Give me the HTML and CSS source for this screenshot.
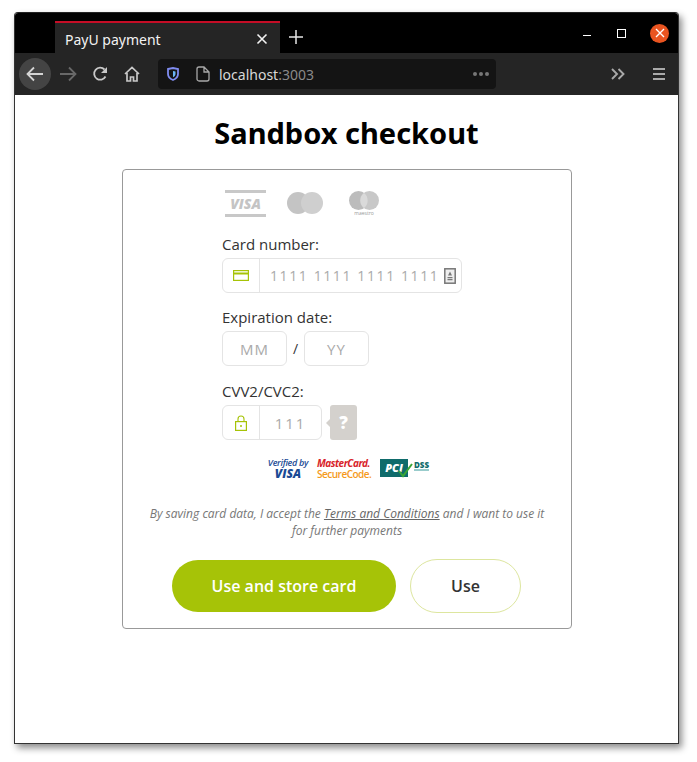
FILE: index.html
```html
<!DOCTYPE html>
<html lang="en">
<head>
    <meta charset="UTF-8">
    <meta name="viewport" content="width=device-width, initial-scale=1.0">
    <title>PayU payment</title>
    <link rel="stylesheet" href="styles.css">
</head>
<body>
    <div class="window">
        <div class="tabstrip">
            <div class="tab">
                <span class="tab-title">PayU payment</span>
                <svg class="tab-close" width="12" height="12" viewBox="0 0 12 12"><path d="M1.5 1.5l9 9M10.5 1.5l-9 9" stroke="#f2f2f2" stroke-width="1.6"/></svg>
            </div>
            <svg class="new-tab" width="14" height="14" viewBox="0 0 14 14"><path d="M7 0v14M0 7h14" stroke="#e6e6e6" stroke-width="1.5"/></svg>
            <div class="win-controls">
                <span class="win-min"></span>
                <span class="win-max"></span>
                <span class="win-close">
                    <svg width="10" height="10" viewBox="0 0 10 10"><path d="M1 1l8 8M9 1l-8 8" stroke="#fff" stroke-width="1.4"/></svg>
                </span>
            </div>
        </div>

        <div class="toolbar">
            <span class="back-btn">
                <svg width="18" height="16" viewBox="0 0 18 16"><path d="M17 8H2M8 1.5L1.5 8 8 14.5" fill="none" stroke="#d4d4d4" stroke-width="1.8"/></svg>
            </span>
            <svg class="fwd" width="18" height="16" viewBox="0 0 18 16"><path d="M1 8h15M10 1.5L16.500 8 10 14.500" fill="none" stroke="#686868" stroke-width="1.8"/></svg>
            <svg class="reload" width="16" height="16" viewBox="0 0 16 16"><path d="M13.500 10.500A6 6 0 1 1 12.500 3.500" fill="none" stroke="#c8c8c8" stroke-width="1.800"/><path d="M15 1v6H9z" fill="#c8c8c8"/></svg>
            <svg class="home" width="16" height="16" viewBox="0 0 16 16"><path d="M1 8l7-6.500L15 8M3 7v8h3.500v-4h3v4H13V7" fill="none" stroke="#c8c8c8" stroke-width="1.700"/></svg>
            <div class="urlbar">
                <svg class="shield" width="12" height="14" viewBox="0 0 12 14"><path d="M1 2l5-1 5 1v5c0 3-2.500 5-5 6-2.500-1-5-3-5-6z" fill="none" stroke="#7f8cf0" stroke-width="1.800"/><path d="M6 4l2.500.6V7c0 1.500-1.200 2.600-2.500 3.200z" fill="#6bb5f5"/></svg>
                <svg class="doc" width="14" height="16" viewBox="0 0 14 16"><path d="M1 3a2 2 0 0 1 2-2h5l5 5v7a2 2 0 0 1-2 2H3a2 2 0 0 1-2-2zM8 1v5h5" fill="none" stroke="#a8a8a8" stroke-width="1.300"/></svg>
                <span class="url">localhost<span class="url-port">:3003</span></span>
                <span class="url-dots"><i></i><i></i><i></i></span>
            </div>
            <svg class="overflow" width="14" height="12" viewBox="0 0 14 12"><path d="M1 1l5 5-5 5M7.500 1l5 5-5 5" fill="none" stroke="#a8a8a8" stroke-width="1.900"/></svg>
            <span class="burger"><i></i><i></i><i></i></span>
        </div>

        <main class="content">
            <h1 class="page-title">Sandbox checkout</h1>
            <form class="card">
                <div class="form-col">
                    <div class="brands">
                        <div class="brand-visa"><span>VISA</span></div>
                        <svg class="brand-mc" width="36" height="22" viewBox="0 0 36 22"><circle cx="11" cy="11" r="11" fill="#c4c4c4"/><circle cx="25" cy="11" r="11" fill="#cfcfcf"/></svg>
                        <div class="brand-maestro">
                            <svg width="30" height="19" viewBox="0 0 30 19"><circle cx="9.500" cy="9.500" r="9.500" fill="#bcbcbc"/><circle cx="20.500" cy="9.500" r="9.500" fill="#c8c8c8"/><path d="M15 2a9.500 9.500 0 0 1 0 15 9.500 9.500 0 0 1 0-15z" fill="#dadada"/></svg>
                            <span>maestro</span>
                        </div>
                    </div>

                    <label class="field-label">Card number:</label>
                    <div class="input-box input-number">
                        <span class="input-icon">
                            <svg width="16" height="11" viewBox="0 0 16 11"><rect x=".6" y=".6" width="14.800" height="9.800" fill="none" stroke="#a6c307" stroke-width="1.200"/><path d="M0 3.500h16" stroke="#a6c307" stroke-width="2"/></svg>
                        </span>
                        <span class="input-ph">1111 1111 1111 1111</span>
                        <svg class="scan" width="12" height="16" viewBox="0 0 12 16"><rect x=".8" y=".8" width="10.400" height="14.400" fill="#eee" stroke="#777" stroke-width="1.500"/><path d="M6 3.500l2 4H4zM3.500 9h5v1.200h-5zM3.500 11h5v1.200h-5z" fill="#777"/></svg>
                    </div>

                    <label class="field-label">Expiration date:</label>
                    <div class="exp-row">
                        <div class="input-box input-exp">MM</div>
                        <span class="exp-sep">/</span>
                        <div class="input-box input-exp">YY</div>
                    </div>

                    <label class="field-label">CVV2/CVC2:</label>
                    <div class="cvv-row">
                        <div class="input-box input-cvv">
                            <span class="input-icon">
                                <svg width="12" height="16" viewBox="0 0 12 16"><path d="M3 7V4a3 3 0 0 1 6 0v3" fill="none" stroke="#a6c307" stroke-width="1.100"/><rect x=".6" y="6.600" width="10.800" height="8.800" fill="none" stroke="#a6c307" stroke-width="1.200"/><circle cx="6" cy="11" r="1" fill="#a6c307"/></svg>
                            </span>
                            <span class="input-ph">111</span>
                        </div>
                        <span class="help">?</span>
                    </div>

                    <div class="secure-logos">
                        <div class="logo-vbv"><span>Verified by</span><b>VISA</b></div>
                        <div class="logo-msc"><span>MasterCard.</span><b>SecureCode.</b></div>
                        <div class="logo-pci">
                            <span class="pci-badge">PCI</span>
                            <svg class="pci-check" width="16" height="15" viewBox="0 0 16 15"><path d="M1 8l4 5 9-12" fill="none" stroke="#3aa535" stroke-width="2"/></svg>
                            <span class="pci-dss">DSS</span>
                        </div>
                    </div>
                </div>

                <p class="terms">By saving card data, I accept the <a href="#">Terms and Conditions</a> and I want to use it for further payments</p>

                <div class="actions">
                    <button type="button" class="btn-primary">Use and store card</button>
                    <button type="button" class="btn-secondary">Use</button>
                </div>
            </form>
        </main>
    </div>
</body>
</html>
```

FILE: styles.css
```css
body {
    margin: 0;
    padding: 12px 18px 18px 14px;
    background-color: #fff;
    font-family: "Open Sans", Arial, sans-serif;
}
.window {
    height: 732px;
    box-sizing: border-box;
    display: flex;
    flex-direction: column;
    border: 1px solid #333;
    border-top-color: #222;
    border-radius: 4px 4px 0 0;
    box-shadow: 3px 4px 7px rgba(0, 0, 0, 0.45);
    overflow: hidden;
}

/* tab strip */
.tabstrip {
    height: 40px;
    flex: none;
    display: flex;
    align-items: flex-end;
    background-color: #000;
}
.tab {
    width: 225px;
    height: 32px;
    margin-left: 40px;
    box-sizing: border-box;
    display: flex;
    align-items: center;
    justify-content: space-between;
    padding: 2px 12px 0 10px;
    background-color: #252525;
    border-top: 2px solid #c50d26;
    color: #f2f2f2;
    font-family: "Noto Sans", sans-serif;
    font-size: 14px;
}
.new-tab {
    margin: 0 0 9px 9px;
}
.win-controls {
    margin-left: auto;
    align-self: stretch;
    display: flex;
    align-items: center;
    padding-right: 9px;
    gap: 24px;
}
.win-min {
    width: 8px;
    height: 1px;
    margin-top: 5px;
    background-color: #fff;
}
.win-max {
    width: 7px;
    height: 7px;
    border: 1px solid #fff;
    margin-left: 2px;
}
.win-close {
    width: 19px;
    height: 19px;
    border-radius: 50%;
    background-color: #e95420;
    display: flex;
    align-items: center;
    justify-content: center;
}

/* toolbar */
.toolbar {
    height: 42px;
    flex: none;
    display: flex;
    align-items: center;
    background-color: #252525;
}
.back-btn {
    width: 32px;
    height: 32px;
    margin-left: 4px;
    border-radius: 50%;
    background-color: #444;
    display: flex;
    align-items: center;
    justify-content: center;
}
.fwd {
    margin-left: 8px;
}
.reload {
    margin-left: 15px;
}
.home {
    margin-left: 16px;
}
.urlbar {
    width: 338px;
    height: 30px;
    margin-left: 18px;
    display: flex;
    align-items: center;
    background-color: #141414;
    border-radius: 4px;
}
.shield {
    margin-left: 9px;
}
.doc {
    margin-left: 17px;
}
.url {
    margin-left: 9px;
    color: #d8d8d8;
    font-family: "Noto Sans", sans-serif;
    font-size: 14px;
}
.url-port {
    color: #8a8a8a;
}
.url-dots {
    margin-left: auto;
    margin-right: 7px;
    display: flex;
    gap: 2px;
}
.url-dots i {
    width: 4px;
    height: 4px;
    border-radius: 50%;
    background-color: #777;
}
.overflow {
    margin-left: 115px;
}
.burger {
    margin-left: 28px;
    width: 12px;
    display: flex;
    flex-direction: column;
    gap: 3px;
}
.burger i {
    height: 2px;
    background-color: #aaa;
}

/* page */
.content {
    flex: 1;
    background-color: #fff;
    padding-top: 19px;
}
.page-title {
    margin: 0 0 15px;
    height: 40px;
    line-height: 38px;
    text-align: center;
    font-family: "Noto Sans", sans-serif;
    font-size: 29px;
    font-weight: 700;
    color: #000;
}
.card {
    width: 450px;
    height: 460px;
    margin-left: 107px;
    box-sizing: border-box;
    border: 1px solid #999;
    border-radius: 4px;
}
.form-col {
    margin-left: 99px;
    padding-top: 20px;
}
.brands {
    display: flex;
    align-items: flex-start;
    height: 28px;
    padding-left: 3px;
}
.brand-visa {
    width: 41px;
    height: 27px;
    box-sizing: border-box;
    border-top: 3px solid #c8c8c8;
    border-bottom: 3px solid #c8c8c8;
    display: flex;
    align-items: center;
    justify-content: center;
    color: #c4c4c4;
    font-size: 14px;
    font-weight: 800;
    font-style: italic;
}
.brand-mc {
    margin: 2px 0 0 21px;
}
.brand-maestro {
    margin: 1px 0 0 26px;
    display: flex;
    flex-direction: column;
    align-items: center;
}
.brand-maestro span {
    font-size: 5px;
    line-height: 6px;
    color: #999;
}
.field-label {
    display: block;
    color: #333;
    font-size: 15px;
    line-height: 20px;
    margin-bottom: 4px;
}
.brands + .field-label {
    margin-top: 16px;
}
.input-box {
    height: 35px;
    box-sizing: border-box;
    border: 1px solid #e4e4e4;
    border-radius: 6px;
    color: #aaa;
    font-size: 15px;
    letter-spacing: 1px;
}
.input-icon {
    width: 36px;
    height: 100%;
    flex: none;
    border-right: 1px solid #e4e4e4;
    display: flex;
    align-items: center;
    justify-content: center;
}
.input-number {
    width: 240px;
    margin-bottom: 14px;
    display: flex;
    align-items: center;
}
.input-number .input-ph {
    margin-left: 10px;
    font-size: 14px;
    letter-spacing: 1.600px;
    white-space: nowrap;
}
.scan {
    margin-left: 5px;
}
.exp-row {
    display: flex;
    align-items: center;
    margin-bottom: 15px;
}
.input-exp {
    width: 65px;
    display: flex;
    align-items: center;
    justify-content: center;
}
.exp-sep {
    width: 17px;
    text-align: center;
    color: #333;
    font-size: 14px;
}
.cvv-row {
    display: flex;
    align-items: stretch;
}
.input-cvv {
    width: 100px;
    display: flex;
    align-items: center;
}
.input-cvv .input-ph {
    flex: 1;
    text-align: center;
    letter-spacing: 2px;
}
.help {
    position: relative;
    width: 27px;
    margin-left: 8px;
    border-radius: 3px;
    background-color: #d4d1cd;
    color: #fff;
    font-size: 17px;
    font-weight: 800;
    display: flex;
    align-items: center;
    justify-content: center;
}
.help::before {
    content: "";
    position: absolute;
    left: -4px;
    top: 14px;
    border-top: 4px solid transparent;
    border-bottom: 4px solid transparent;
    border-right: 4px solid #d4d1cd;
}
.secure-logos {
    display: flex;
    align-items: center;
    height: 22px;
    margin-top: 18px;
    padding-left: 39px;
}
.logo-vbv {
    width: 54px;
    display: flex;
    flex-direction: column;
    align-items: center;
    color: #1a4a94;
    font-style: italic;
    line-height: 10px;
}
.logo-vbv span {
    font-size: 9px;
    font-weight: 600;
    letter-spacing: -0.300px;
    white-space: nowrap;
}
.logo-vbv b {
    font-size: 12px;
    font-weight: 800;
    line-height: 12px;
}
.logo-msc {
    margin-left: 2px;
    width: 62px;
    display: flex;
    flex-direction: column;
    font-size: 10px;
    line-height: 11px;
    font-weight: 700;
    letter-spacing: -0.500px;
    white-space: nowrap;
}
.logo-msc span {
    color: #d8232a;
    font-style: italic;
}
.logo-msc b {
    color: #f59a1c;
    font-weight: 600;
}
.logo-pci {
    position: relative;
    margin-left: 1px;
    display: flex;
    align-items: flex-start;
    height: 20px;
}
.pci-badge {
    width: 28px;
    height: 18px;
    background-color: #0f6b6b;
    color: #fff;
    font-size: 11px;
    line-height: 18px;
    font-weight: 800;
    font-style: italic;
    text-align: center;
}
.pci-check {
    position: absolute;
    left: 18px;
    top: 4px;
}
.pci-dss {
    margin-left: 6px;
    margin-top: 1px;
    color: #0f6b6b;
    font-size: 8px;
    line-height: 10px;
    font-weight: 800;
    border-bottom: 2px solid #9cc;
    height: 9px;
}
.terms {
    width: 400px;
    margin: 25px auto 20px;
    text-align: center;
    color: #777;
    font-size: 12px;
    line-height: 17px;
    font-style: italic;
}
.terms a {
    color: #666;
}
.actions {
    display: flex;
    align-items: center;
    padding-left: 49px;
    gap: 14px;
}
.btn-primary {
    width: 224px;
    height: 52px;
    border: none;
    border-radius: 26px;
    background-color: #a6c307;
    color: #fff;
    font-family: inherit;
    font-size: 16px;
    font-weight: 600;
}
.btn-secondary {
    width: 111px;
    height: 54px;
    border: 1px solid #dde69f;
    border-radius: 27px;
    background-color: #fff;
    color: #333;
    font-family: inherit;
    font-size: 16px;
    font-weight: 600;
}
```
